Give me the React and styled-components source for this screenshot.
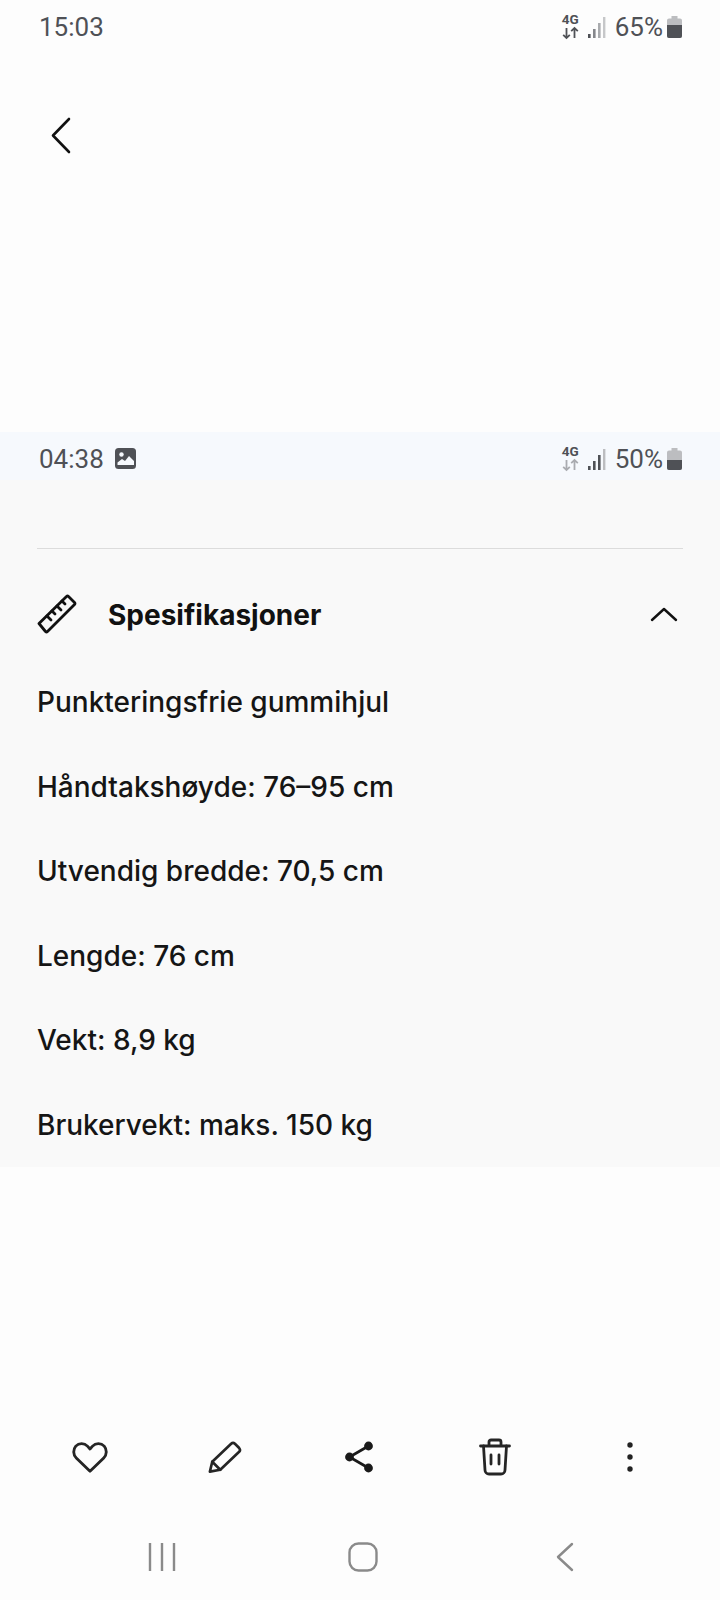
import styled, { createGlobalStyle } from "styled-components"

const GlobalStyle = createGlobalStyle`
    html, body {
        margin: 0;
        padding: 0;
        background: #fdfdfd;
    }
`

const Page = styled.div`
    width: 720px;
    height: 1600px;
    display: flex;
    flex-direction: column;
    background: #fdfdfd;
    overflow: hidden;
`

const StatusBar = styled.div`
    height: ${(p) => p.$height}px;
    flex-shrink: 0;
    box-sizing: border-box;
    padding: ${(p) => p.$top}px 38px 0 39px;
    display: flex;
    justify-content: space-between;
    align-items: flex-start;
    background: ${(p) => p.$bg};
    font-family: Roboto, sans-serif;
    font-size: 26px;
    line-height: 30px;
    color: #4f5156;
`

const StatusLeft = styled.div`
    display: flex;
    align-items: center;
    gap: 11px;
`

const StatusRight = styled.div`
    display: flex;
    align-items: center;
`

const NetworkGlyph = styled.div`
    position: relative;
    width: 46px;
    height: 26px;
`

const NetworkLabel = styled.span`
    position: absolute;
    left: 0;
    top: -2px;
    font-size: 13.5px;
    line-height: 15px;
    font-weight: 700;
`

const NetworkSvg = styled.svg`
    display: block;
`

const Percent = styled.span`
    margin-left: 7px;
    margin-right: 4px;
`

const Header = styled.div`
    height: 378px;
    flex-shrink: 0;
    padding-left: 48px;
    box-sizing: border-box;
    padding-top: 62px;
`

const Panel = styled.div`
    height: 687px;
    flex-shrink: 0;
    background: #f9f9f9;
    padding: 68px 37px 0;
    box-sizing: border-box;
`

const Divider = styled.div`
    height: 1px;
    background: #dcdcdc;
`

const SectionHead = styled.div`
    height: 130px;
    display: flex;
    align-items: center;
    color: #111;
`

const SectionTitle = styled.h2`
    flex: 1;
    margin: 2px 0 0 31px;
    font-family: Inter, sans-serif;
    font-size: 28px;
    font-weight: 700;
    color: #111;
`

const SpecList = styled.div`
    display: flex;
    flex-direction: column;
    margin-top: -19px;
`

const Spec = styled.div`
    height: 84.5px;
    line-height: 84.5px;
    font-family: Inter, sans-serif;
    font-size: 28px;
    font-weight: 500;
    color: #151515;
`

const Actions = styled.div`
    margin-top: 260px;
    height: 60px;
    flex-shrink: 0;
    padding: 0 68px;
    display: flex;
    justify-content: space-between;
    align-items: center;
    color: #252525;
`

const ActionSlot = styled.div`
    width: 44px;
    height: 44px;
    display: flex;
    align-items: center;
    justify-content: center;
`

const NavBar = styled.div`
    margin-top: 50px;
    height: 40px;
    flex-shrink: 0;
    padding: 0 146px 0 148px;
    display: flex;
    justify-content: space-between;
    align-items: center;
    color: #8a8a8a;
`

const NetworkIcon = ({ arrows, bars }) => (
    <NetworkGlyph>
        <NetworkLabel>4G</NetworkLabel>
        <NetworkSvg width="46" height="26" viewBox="0 0 46 26" fill="none">
            <g stroke={arrows} strokeWidth="1.8">
                <path d="M4.5 14v10M1.2 20.800l3.300 3.300 3.300-3.300" />
                <path d="M12.500 24v-10M9.200 17.200l3.300-3.300 3.300 3.300" />
            </g>
            <rect x="26" y="20" width="2.600" height="4" fill={bars[0]} />
            <rect x="31" y="15" width="2.600" height="9" fill={bars[1]} />
            <rect x="36" y="9" width="2.600" height="15" fill={bars[2]} />
            <rect x="41" y="3" width="2.400" height="21" fill={bars[3]} />
        </NetworkSvg>
    </NetworkGlyph>
)

const Battery = ({ level }) => (
    <svg width="15" height="22" viewBox="0 0 15 22">
        <path d="M4.5 0h6v2.5h2.5a2 2 0 0 1 2 2V20a2 2 0 0 1-2 2H2a2 2 0 0 1-2-2V4.5a2 2 0 0 1 2-2h2.5z" fill="#bcbdc0" />
        <path d={`M0 ${level}h15V20a2 2 0 0 1-2 2H2a2 2 0 0 1-2-2z`} fill="#4f5156" />
    </svg>
)

const App = () => (
    <Page>
        <GlobalStyle />
        <StatusBar $height={54} $top={12} $bg="#fdfdfd">
            <StatusLeft>15:03</StatusLeft>
            <StatusRight>
                <NetworkIcon arrows="#4f5156" bars={["#4f5156", "#85878b", "#a9abae", "#c6c7c9"]} />
                <Percent>65%</Percent>
                <Battery level={9} />
            </StatusRight>
        </StatusBar>
        <Header>
            <svg width="28" height="40" viewBox="0 0 28 40" fill="none" stroke="#111" strokeWidth="2.6" strokeLinecap="round" strokeLinejoin="round">
                <path d="M21 3L5 19.5 21 36" />
            </svg>
        </Header>
        <StatusBar $height={48} $top={12} $bg="#f6f9fd">
            <StatusLeft>
                04:38
                <svg width="22" height="22" viewBox="0 0 22 22">
                    <rect width="21" height="21" rx="3.5" fill="#4f5156" />
                    <circle cx="6.5" cy="6.5" r="2.2" fill="#f6f9fd" />
                    <path d="M2.5 17v-2.5l4.5-3.5 3 2 4-5 5 5v4z" fill="#f6f9fd" />
                </svg>
            </StatusLeft>
            <StatusRight>
                <NetworkIcon arrows="#a9abb0" bars={["#4f5156", "#4f5156", "#4f5156", "#bcbdc0"]} />
                <Percent>50%</Percent>
                <Battery level={12} />
            </StatusRight>
        </StatusBar>
        <Panel>
            <Divider />
            <SectionHead>
                <svg width="40" height="40" viewBox="0 0 40 40" fill="none" stroke="currentColor" strokeWidth="2.8" strokeLinejoin="round" strokeLinecap="round">
                    <path d="M2 29.5L29.5 2.5a1.5 1.5 0 0 1 2 0l6 6a1.5 1.5 0 0 1 0 2L10.5 37.5a1.5 1.5 0 0 1-2 0z" />
                    <path d="M10 22l4 4M15 17l3 3M20 12l4 4M25 7l3 3" />
                </svg>
                <SectionTitle>Spesifikasjoner</SectionTitle>
                <svg width="28" height="16" viewBox="0 0 28 16" fill="none" stroke="#111" strokeWidth="2.4" strokeLinecap="round" strokeLinejoin="round" style={{ marginRight: 5 }}>
                    <path d="M2 14L14 3l12 11" />
                </svg>
            </SectionHead>
            <SpecList>
                <Spec>Punkteringsfrie gummihjul</Spec>
                <Spec>Håndtakshøyde: 76–95 cm</Spec>
                <Spec>Utvendig bredde: 70,5 cm</Spec>
                <Spec>Lengde: 76 cm</Spec>
                <Spec>Vekt: 8,9 kg</Spec>
                <Spec>Brukervekt: maks. 150 kg</Spec>
            </SpecList>
        </Panel>
        <Actions>
            <ActionSlot>
                <svg width="36" height="33" viewBox="0 0 38 34" fill="none" stroke="currentColor" strokeWidth="3" strokeLinejoin="round">
                    <path d="M19 31.5L4.5 17.5C1 14 1 8.5 4 5c3.300-3.500 9-3.500 12.300 0L19 8l2.700-3c3.300-3.500 9-3.500 12.300 0 3 3.500 3 9-.5 12.500z" />
                </svg>
            </ActionSlot>
            <ActionSlot>
                <svg width="34" height="33" viewBox="0 0 36 34" fill="none" stroke="currentColor" strokeWidth="2.8" strokeLinejoin="round" strokeLinecap="round">
                    <path d="M2 32l2.500-10.500L24.500 2.500a3 3 0 0 1 4 0l4.500 4.500a3 3 0 0 1 0 4L13 30z" />
                    <path d="M4.500 21.500L13 30" />
                </svg>
            </ActionSlot>
            <ActionSlot>
                <svg width="30" height="32" viewBox="0 0 30 32" fill="#1a1a1a" stroke="#1a1a1a" strokeWidth="2.800" style={{ marginLeft: -3 }}>
                    <path d="M24.500 5L5.500 16l19 11" fill="none" />
                    <circle cx="24.500" cy="5" r="3" />
                    <circle cx="5.500" cy="16" r="3" />
                    <circle cx="24.500" cy="27" r="3" />
                </svg>
            </ActionSlot>
            <ActionSlot>
                <svg width="32" height="38" viewBox="0 0 32 38" fill="none" stroke="currentColor" strokeWidth="2.800" strokeLinecap="round" strokeLinejoin="round">
                    <path d="M1.500 8h29M10 8V4a2 2 0 0 1 2-2h8a2 2 0 0 1 2 2v4" />
                    <path d="M4.500 8l1.500 24a4 4 0 0 0 4 4h12a4 4 0 0 0 4-4l1.500-24" />
                    <path d="M12 17v9M20 17v9" />
                </svg>
            </ActionSlot>
            <ActionSlot>
                <svg width="6" height="30" viewBox="0 0 6 30" fill="#222">
                    <circle cx="3" cy="3" r="2.700" />
                    <circle cx="3" cy="15" r="2.700" />
                    <circle cx="3" cy="27" r="2.700" />
                </svg>
            </ActionSlot>
        </Actions>
        <NavBar>
            <svg width="28" height="28" viewBox="0 0 28 28" stroke="currentColor" strokeWidth="2.400">
                <path d="M2 0v28M14 0v28M26 0v28" />
            </svg>
            <svg width="30" height="30" viewBox="0 0 30 30" fill="none" stroke="currentColor" strokeWidth="2.400">
                <rect x="1.500" y="1.500" width="27" height="27" rx="9" />
            </svg>
            <svg width="24" height="30" viewBox="0 0 24 30" fill="none" stroke="currentColor" strokeWidth="2.400" strokeLinecap="round" strokeLinejoin="round">
                <path d="M22 2L8 15l14 13" />
            </svg>
        </NavBar>
    </Page>
)

export default App
